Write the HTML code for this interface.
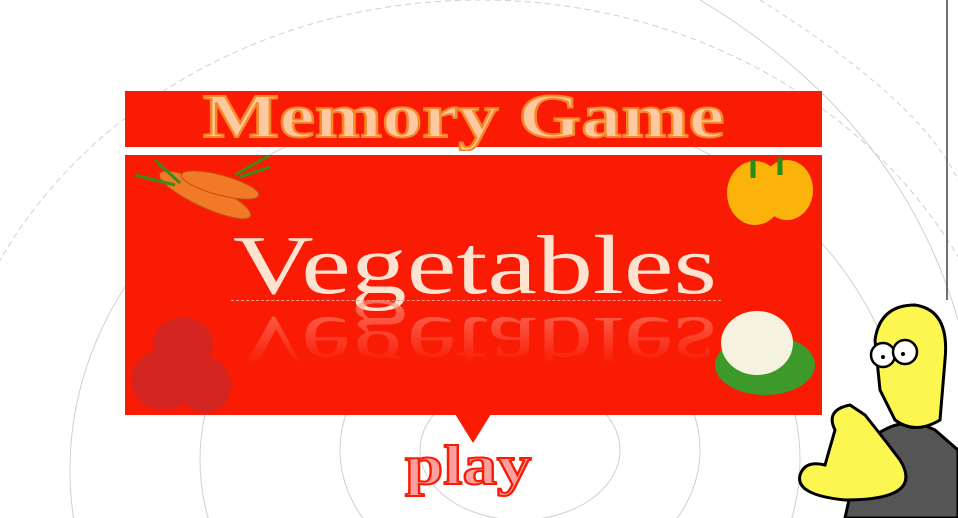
<!DOCTYPE html>
<html><head><meta charset="utf-8"><style>
html,body{margin:0;width:958px;height:518px;overflow:hidden}
body{background:#fff;position:relative;font-family:"Liberation Serif",serif}
.a{position:absolute}
</style></head><body>
<svg class="a" style="left:0;top:0" width="958" height="518">
<g fill="none" stroke="#d0d0d0" stroke-width="1">
<ellipse cx="520" cy="450" rx="100" ry="70"/>
<ellipse cx="520" cy="450" rx="180" ry="140"/>
<ellipse cx="500" cy="460" rx="300" ry="250"/>
<ellipse cx="490" cy="470" rx="420" ry="370"/>
<ellipse cx="480" cy="480" rx="540" ry="480" stroke-dasharray="6 4"/>
<path d="M700 0 Q900 120 958 320"/><path d="M760 0 Q920 100 958 180" stroke-dasharray="5 4"/>
</g>
<line x1="947" y1="0" x2="947" y2="300" stroke="#444" stroke-width="1.5"/>
</svg>
<div class="a" style="left:125px;top:91px;width:697px;height:56px;background:#f91b04"></div>
<div class="a" style="left:203px;top:82px;font:bold 62px 'Liberation Serif',serif;color:#fec9a0;-webkit-text-stroke:2px #f7882a;transform:scaleX(1.3);transform-origin:0 0;white-space:nowrap">Memory Game</div>
<div class="a" style="left:125px;top:155px;width:697px;height:260px;background:#f91b04;overflow:hidden">
<div class="a" style="left:108px;top:62px;font:84px 'Liberation Serif',serif;color:#fde3d0;transform:scaleX(1.33);transform-origin:0 0;white-space:nowrap">Vegetables</div>
<div class="a" style="left:108px;top:142px;font:84px 'Liberation Serif',serif;color:#fb9a85;transform:scaleX(1.33) scaleY(-1);transform-origin:0 50%;opacity:.7;white-space:nowrap;-webkit-mask-image:linear-gradient(to top,#000,transparent 70%)">Vegetables</div>
<div class="a" style="left:106px;top:145px;width:490px;border-top:1px dashed #f5a090"></div>
<svg class="a" style="left:0;top:0" width="697" height="260">
<g fill="#f07a28" stroke="#c2500f"><ellipse cx="80" cy="40" rx="50" ry="12" transform="rotate(25 80 40)"/><ellipse cx="95" cy="30" rx="40" ry="10" transform="rotate(15 95 30)"/></g>
<path d="M10 20 L50 30 M30 5 L55 28 M145 0 L110 20 M145 12 L115 22" stroke="#3a8a1a" stroke-width="3"/>
<g fill="#fbb20a"><ellipse cx="630" cy="38" rx="28" ry="32"/><ellipse cx="662" cy="35" rx="26" ry="30"/></g>
<path d="M628 5 v18 M655 2 v18" stroke="#2a8a1a" stroke-width="5"/>
<g fill="#d42520"><ellipse cx="58" cy="190" rx="30" ry="28"/><ellipse cx="80" cy="230" rx="26" ry="28"/><ellipse cx="38" cy="225" rx="32" ry="30"/></g>
<g fill="#3d9a2a"><ellipse cx="640" cy="210" rx="50" ry="30"/></g>
<g fill="#f6f2e0"><ellipse cx="632" cy="188" rx="36" ry="32"/></g>
</svg>
</div>
<svg class="a" style="left:455px;top:414px" width="36" height="30"><polygon points="0,0 36,0 18,29" fill="#f91b04"/></svg>
<div class="a" style="left:405px;top:436px;font:bold 56px 'Liberation Serif',serif;color:#f9a0a0;-webkit-text-stroke:2px #f91b04;transform:scaleX(1.23);transform-origin:0 0;line-height:1.1">play</div>
<svg class="a" style="left:785px;top:300px" width="173" height="218">
<path d="M60 218 L75 150 Q110 110 150 130 L173 150 L173 218Z" fill="#555" stroke="#000" stroke-width="3"/>
<path d="M90 40 Q95 5 130 5 Q165 10 160 60 L155 120 Q130 135 110 120 L95 90Z" fill="#fbf650" stroke="#000" stroke-width="3"/>
<circle cx="98" cy="55" r="12" fill="#fff" stroke="#000" stroke-width="2.5"/><circle cx="120" cy="52" r="12" fill="#fff" stroke="#000" stroke-width="2.5"/>
<circle cx="98" cy="57" r="2"/><circle cx="118" cy="54" r="2"/>
<path d="M50 130 Q40 110 65 105 L80 115 Q100 140 115 160 Q140 200 60 200 Q10 195 15 175 Q20 160 40 165 Z" fill="#fbf650" stroke="#000" stroke-width="3"/>
</svg>
</body></html>
